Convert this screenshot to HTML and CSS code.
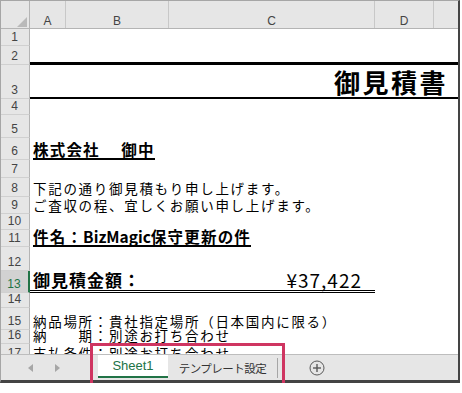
FILE: index.html
```html
<!DOCTYPE html>
<html lang="ja">
<head>
    <meta charset="UTF-8">
    <meta name="viewport" content="width=device-width, initial-scale=1.0">
    <title>御見積書</title>
    <link rel="stylesheet" href="styles.css">
</head>
<body>
    <div class="sheet">
        <div class="col-head">
            <div class="corner">
                <svg width="10" height="10" viewBox="0 0 10 10"><polygon points="10,0 10,10 0,10" fill="#b9b9b9"/></svg>
            </div>
            <div class="ch col-a">A</div>
            <div class="ch col-b">B</div>
            <div class="ch col-c">C</div>
            <div class="ch col-d">D</div>
            <div class="ch col-e"></div>
        </div>

        <div class="grid">
            <div class="row-head">
                <div class="rn r1">1</div>
                <div class="rn r2">2</div>
                <div class="rn r3">3</div>
                <div class="rn r4">4</div>
                <div class="rn r5">5</div>
                <div class="rn r6">6</div>
                <div class="rn r7">7</div>
                <div class="rn r8">8</div>
                <div class="rn r9">9</div>
                <div class="rn r10">10</div>
                <div class="rn r11">11</div>
                <div class="rn r12">12</div>
                <div class="rn r13 selected">13</div>
                <div class="rn r14">14</div>
                <div class="rn r15">15</div>
                <div class="rn r16">16</div>
                <div class="rn r17">17</div>
            </div>
            <div class="cells">
                <div class="row r1"></div>
                <div class="row r2 thick-bottom"></div>
                <div class="row r3 title-row"><span class="title">御見積書</span></div>
                <div class="row r4"></div>
                <div class="row r5"></div>
                <div class="row r6"><span class="client">株式会社　 御中</span></div>
                <div class="row r7"></div>
                <div class="row r8">下記の通り御見積もり申し上げます。</div>
                <div class="row r9">ご査収の程、宜しくお願い申し上げます。</div>
                <div class="row r10"></div>
                <div class="row r11"><span class="subject">件名：<span class="latin">BizMagic</span>保守更新の件</span></div>
                <div class="row r12"></div>
                <div class="row r13 amount">
                    <span class="amount-label">御見積金額：</span>
                    <span class="amount-value">¥37,422</span>
                </div>
                <div class="row r14"></div>
                <div class="row r15">納品場所：貴社指定場所（日本国内に限る）</div>
                <div class="row r16">納　　期：別途お打ち合わせ</div>
                <div class="row r17">支払条件：別途お打ち合わせ</div>
            </div>
        </div>

        <div class="tab-bar">
            <div class="tab-nav">
                <svg width="5" height="8" viewBox="0 0 5 8"><polygon points="5,0 5,8 0,4" fill="#a6a6a6"/></svg>
                <svg width="5" height="8" viewBox="0 0 5 8"><polygon points="0,0 0,8 5,4" fill="#a6a6a6"/></svg>
            </div>
            <div class="tab active">Sheet1</div>
            <div class="tab">テンプレート設定</div>
            <div class="tab-sep"></div>
            <div class="add-sheet">
                <svg width="16" height="16" viewBox="0 0 16 16">
                    <circle cx="8" cy="8" r="7" fill="none" stroke="#5a5a5a" stroke-width="1"/>
                    <line x1="4" y1="8" x2="12" y2="8" stroke="#5a5a5a" stroke-width="1.4"/>
                    <line x1="8" y1="4" x2="8" y2="12" stroke="#5a5a5a" stroke-width="1.4"/>
                </svg>
            </div>
        </div>

        <div class="highlight"></div>
    </div>
</body>
</html>
```

FILE: styles.css
```css
* {
    box-sizing: border-box;
    margin: 0;
    padding: 0;
}
body {
    background: #fff;
    font-family: "Noto Sans CJK JP", sans-serif;
}
.sheet {
    position: relative;
    width: 460px;
    border-top: 1px solid #a6a6a6;
    border-left: 1px solid #a6a6a6;
    border-right: 2px solid #444;
    border-bottom: 3px solid #444;
    background: #fff;
}

/* column header */
.col-head {
    display: flex;
    height: 28px;
    background: #e6e6e6;
    border-bottom: 1px solid #b4b4b4;
    font: 12px "Liberation Sans", Arial, sans-serif;
    line-height: 13px;
    color: #444;
}
.corner {
    width: 29px;
    border-right: 1px solid #b4b4b4;
    display: flex;
    align-items: flex-end;
    justify-content: flex-end;
    padding: 0 2px 1px 0;
}
.corner svg {
    display: block;
}
.ch {
    display: flex;
    align-items: flex-end;
    justify-content: center;
    border-right: 1px solid #c8c8c8;
}
.col-a { width: 36px; }
.col-b { width: 103px; }
.col-c { width: 206px; }
.col-d { width: 59px; }
.col-e { flex: 1; border-right: none; }

/* rows */
.grid {
    display: flex;
    height: 325px;
    overflow: hidden;
}
.row-head {
    width: 29px;
    background: #e6e6e6;
    font: 12px "Liberation Sans", Arial, sans-serif;
    line-height: 13px;
    color: #444;
}
.rn {
    display: flex;
    align-items: flex-end;
    justify-content: center;
    padding: 0 1px 1px 0;
    border-bottom: 1px solid #d0d0d0;
    border-right: 1px solid #b4b4b4;
}
.rn.selected {
    background: #d2d2d2;
    color: #217346;
    border-right: 2px solid #217346;
}
.cells {
    flex: 1;
}
.row {
    display: flex;
    align-items: flex-end;
    padding: 0 0 2px 3px;
    font-size: 13.5px;
    letter-spacing: 1.7px;
    line-height: 14px;
    color: #000;
    white-space: nowrap;
}

.r1 { height: 17px; }
.r2 { height: 19px; }
.r3 { height: 34px; }
.r4 { height: 16px; }
.r5 { height: 23px; }
.r6 { height: 22px; }
.r7 { height: 18px; }
.r8 { height: 19px; }
.r9 { height: 17px; }
.r10 { height: 16px; }
.r11 { height: 17px; }
.r12 { height: 24px; }
.r13 { height: 22px; }
.r14 { height: 15px; }
.r15 { height: 22px; }
.r16 { height: 14px; }
.r17 { height: 18px; }

.thick-bottom {
    border-bottom: 3px solid #000;
}
.title-row {
    justify-content: flex-end;
    padding: 0 10px 0 0;
    border-bottom: 2px solid #000;
}
.title {
    font-size: 26px;
    font-weight: bold;
    letter-spacing: 2.5px;
    line-height: 31px;
}
.client,
.subject {
    display: inline-block;
    font-size: 15.5px;
    font-weight: bold;
    letter-spacing: 1.2px;
    line-height: 17px;
    border-bottom: 2px solid #000;
}
.row.r6,
.row.r11 {
    padding-bottom: 0;
}
.subject .latin {
    letter-spacing: 0;
}
.amount {
    width: 345px;
    justify-content: space-between;
    padding: 0 13px 1px 3px;
    border-bottom: 3px double #000;
    font-weight: bold;
}
.amount-label {
    font-size: 17px;
    letter-spacing: 1px;
    line-height: 19px;
}
.amount-value {
    font-size: 19px;
    font-weight: normal;
    letter-spacing: 1px;
    line-height: 19px;
}

/* sheet tabs */
.tab-bar {
    display: flex;
    align-items: flex-start;
    height: 26px;
    background: #e6e6e6;
    border-top: 1px solid #bdbdbd;
}
.tab-nav {
    width: 97px;
    height: 25px;
    display: flex;
    align-items: center;
    gap: 22px;
    padding-left: 27px;
}
.tab-nav svg {
    display: block;
}
.tab {
    height: 25px;
    display: flex;
    align-items: center;
    justify-content: center;
    font-size: 11.5px;
    letter-spacing: -0.5px;
    color: #333;
    width: 109px;
}
.tab.active {
    width: 70px;
    height: 23px;
    background: #fff;
    border-bottom: 2px solid #217346;
    color: #217346;
    font: 13px "Liberation Sans", Arial, sans-serif;
    letter-spacing: 0;
}
.tab-sep {
    width: 1px;
    height: 20px;
    margin-top: 3px;
    background: #a6a6a6;
}
.add-sheet {
    height: 25px;
    display: flex;
    align-items: center;
    margin-left: 31px;
}
.add-sheet svg {
    display: block;
}

/* red frame drawn over the tabs */
.highlight {
    position: absolute;
    left: 89px;
    top: 342px;
    width: 195px;
    height: 48px;
    border: 3px solid #cf3561;
}
```
